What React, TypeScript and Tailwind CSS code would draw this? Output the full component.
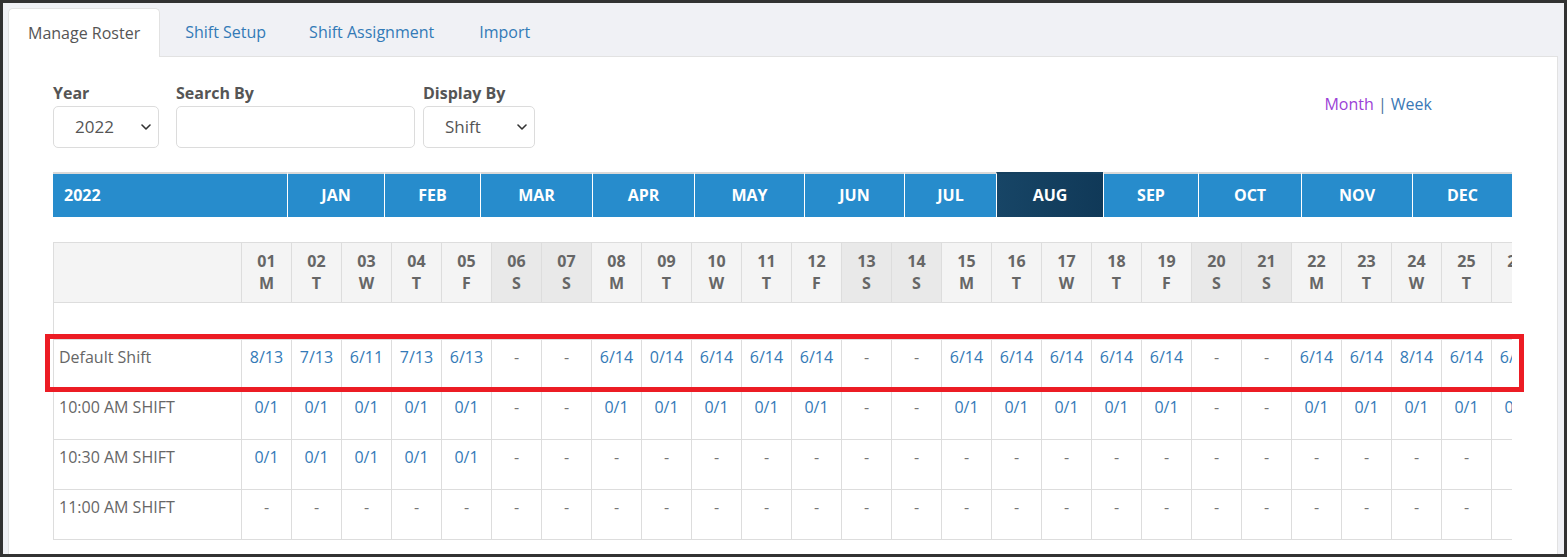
const font = "font-['Open_Sans',Arial,sans-serif]";

const tabs = [
    { label: "Manage Roster", gap: "mr-[5px]" },
    { label: "Shift Setup", gap: "mr-[3px]" },
    { label: "Shift Assignment", gap: "mr-[5px]" },
    { label: "Import", gap: "mr-[3px]" },
];

const months = [
    { label: "JAN", width: "w-[97px]" },
    { label: "FEB", width: "w-[96px]" },
    { label: "MAR", width: "w-[112px]" },
    { label: "APR", width: "w-[102px]" },
    { label: "MAY", width: "w-[110px]" },
    { label: "JUN", width: "w-[100px]" },
    { label: "JUL", width: "w-[92px]" },
    { label: "AUG", width: "w-[107px]", active: true },
    { label: "SEP", width: "w-[95px]" },
    { label: "OCT", width: "w-[103px]" },
    { label: "NOV", width: "w-[111px]" },
    { label: "DEC", width: "w-[100px]" },
];

const letters = ["M", "T", "W", "T", "F", "S", "S"];

const days = Array.from({ length: 26 }, (_, i) => ({
    num: String(i + 1).padStart(2, "0"),
    letter: letters[i % 7],
    weekend: i % 7 >= 5,
}));

const defaultShift =
    "8/13 7/13 6/11 7/13 6/13 - - 6/14 0/14 6/14 6/14 6/14 - - 6/14 6/14 6/14 6/14 6/14 - - 6/14 6/14 8/14 6/14 6/14".split(" ");

const rows = [
    { name: "Default Shift", values: defaultShift },
    { name: "10:00 AM SHIFT", values: days.map((d) => (d.weekend ? "-" : "0/1")) },
    { name: "10:30 AM SHIFT", values: days.map((_, i) => (i < 5 ? "0/1" : "-")) },
    { name: "11:00 AM SHIFT", values: days.map(() => "-") },
];

function Chevron() {
    return (
        <svg width="10" height="6" viewBox="0 0 10 6" className="shrink-0">
            <path d="M1 1l4 4 4-4" stroke="#333" strokeWidth="1.6" fill="none" strokeLinecap="round" strokeLinejoin="round" />
        </svg>
    );
}

function SelectBox({ value, width }: { value: string; width: string }) {
    return (
        <div className={`flex items-center justify-between h-[42px] ${width} border border-[#dcdcdc] rounded-[5px] pl-[21px] pr-[7px] text-[17px] text-[#555]`}>
            <span>{value}</span>
            <Chevron />
        </div>
    );
}

function FieldLabel({ children }: { children: string }) {
    return <div className="mb-[2px] text-[16px] leading-[22px] font-bold text-[#555]">{children}</div>;
}

export default function App() {
    return (
        <div className={`relative w-[1567px] h-[557px] overflow-hidden border-[3px] border-[#323232] bg-[#f0f1f5] flex flex-col ${font}`}>
            {/* tabs */}
            <div className="flex items-start pl-[5px] pt-[5px] h-[53px] shrink-0">
                {tabs.map((t, i) => (
                    <div
                        key={t.label}
                        className={
                            i === 0
                                ? `relative z-10 flex items-center h-[49px] ${t.gap} px-[19px] bg-white border border-b-0 border-[#e2e2e2] rounded-t-[5px] text-[16px] text-[#555]`
                                : `flex items-center h-[48px] ${t.gap} px-[19px] border border-transparent text-[16px] text-[#337ab7]`
                        }
                    >
                        {t.label}
                    </div>
                ))}
            </div>

            {/* panel */}
            <div className="flex-1 min-h-0 ml-[5px] mr-[6px] bg-white border border-b-0 border-[#e2e2e2] pl-[44px] pt-[25px]">
                <div className="flex items-start w-[1459px]">
                    <div className="w-[106px]">
                        <FieldLabel>Year</FieldLabel>
                        <SelectBox value="2022" width="w-[106px]" />
                    </div>
                    <div className="w-[239px] ml-[17px]">
                        <FieldLabel>Search By</FieldLabel>
                        <div className="h-[42px] w-[239px] border border-[#dcdcdc] rounded-[5px]" />
                    </div>
                    <div className="w-[112px] ml-[8px]">
                        <FieldLabel>Display By</FieldLabel>
                        <SelectBox value="Shift" width="w-[112px]" />
                    </div>
                    <div className="ml-auto mr-[80px] mt-[11px] text-[16px] leading-[22px]">
                        <span className="text-[#9b42d6]">Month</span>
                        <span className="text-[#4a6f9c]"> | </span>
                        <span className="text-[#3a78b5]">Week</span>
                    </div>
                </div>

                {/* month bar */}
                <div className="flex mt-[24px] w-[1459px] h-[45px] text-[16px] font-bold text-white">
                    <div className="flex items-center w-[234px] pl-[11px] pb-[2px] bg-[#278ccc] border-t-2 border-[#d9d9d9]">2022</div>
                    {months.map((m) => (
                        <div
                            key={m.label}
                            className={`flex items-center justify-center shrink-0 pb-[2px] ${m.width} border-l border-l-white ${
                                m.active
                                    ? "bg-gradient-to-r from-[#174566] to-[#103958] border-t-2 border-t-[#15405f]"
                                    : "bg-[#278ccc] border-t-2 border-t-[#d9d9d9]"
                            }`}
                        >
                            {m.label}
                        </div>
                    ))}
                </div>

                {/* day grid */}
                <div className="mt-[25px] w-[1459px] overflow-hidden border-t border-l border-[#dddddd] text-[16px]">
                    <div className="flex w-max">
                        <div className="w-[188px] h-[60px] shrink-0 bg-[#f4f4f4] border-r border-b border-[#dddddd]" />
                        {days.map((d) => (
                            <div
                                key={d.num}
                                className={`flex flex-col items-center justify-center w-[50px] h-[60px] pb-[2px] shrink-0 border-r border-b border-[#dddddd] font-bold leading-[22px] text-[#666] ${
                                    d.weekend ? "bg-[#e9e9e9]" : "bg-[#f4f4f4]"
                                }`}
                            >
                                <span>{d.num}</span>
                                <span>{d.letter}</span>
                            </div>
                        ))}
                    </div>
                    <div className="h-[37px] border-b border-[#dddddd]" />
                    {rows.map((r) => (
                        <div key={r.name} className="flex w-max">
                            <div className="w-[188px] h-[50px] shrink-0 pl-[5px] pt-[6px] leading-[22px] border-r border-b border-[#dddddd] text-[#666]">
                                {r.name}
                            </div>
                            {r.values.map((v, i) => (
                                <div
                                    key={i}
                                    className={`w-[50px] h-[50px] shrink-0 pt-[6px] leading-[22px] text-center whitespace-nowrap border-r border-b border-[#dddddd] ${
                                        v === "-" ? "text-[#777]" : "text-[#337ab7]"
                                    }`}
                                >
                                    {v}
                                </div>
                            ))}
                        </div>
                    ))}
                </div>
            </div>

            {/* highlight box */}
            <div className="absolute left-[42px] top-[331px] w-[1479px] h-[58px] border-[5px] border-[#ec1c24] pointer-events-none" />
        </div>
    );
}
